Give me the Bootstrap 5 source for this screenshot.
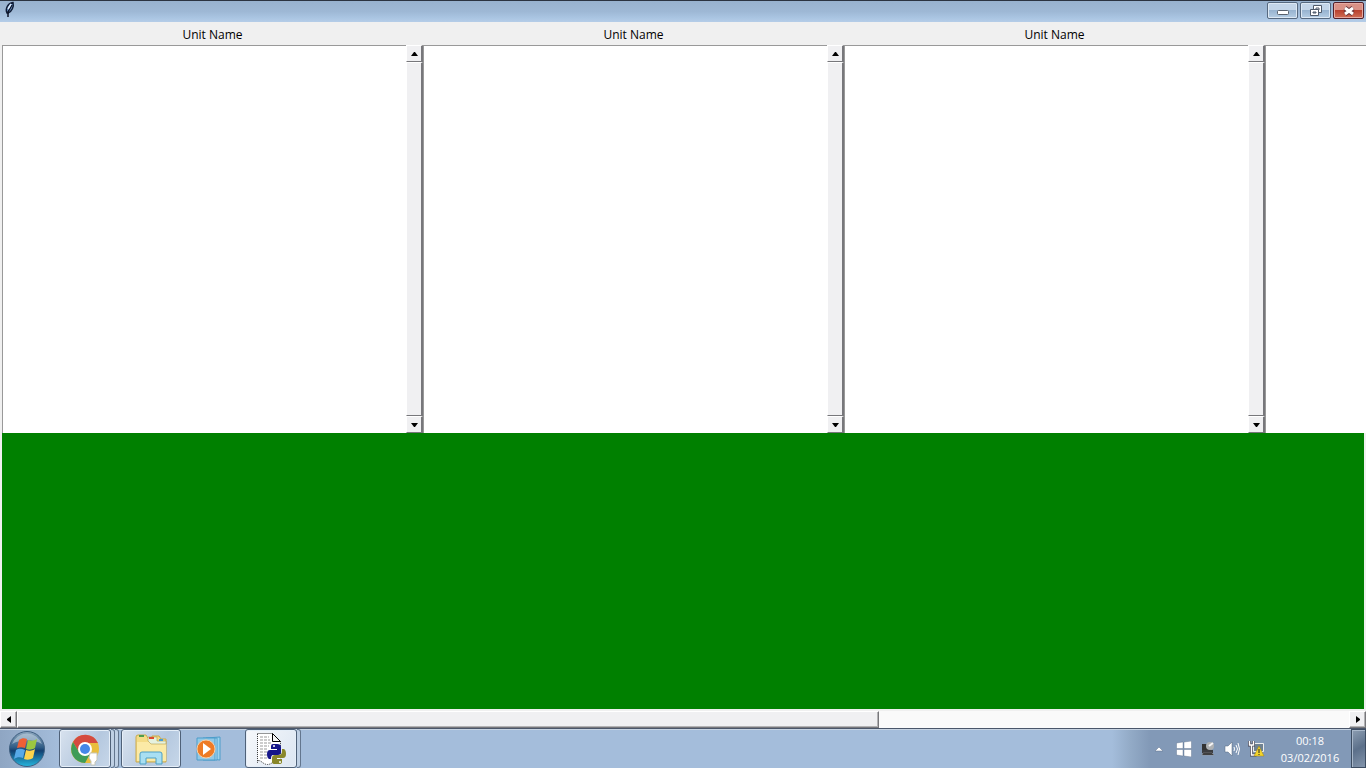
<!DOCTYPE html>
<html lang="en">
<head>
<meta charset="utf-8">
<meta name="viewport" content="width=device-width, initial-scale=1">
<title>Unit lists</title>
<link href="https://cdn.jsdelivr.net/npm/bootstrap@5.3.0/dist/css/bootstrap.min.css" rel="stylesheet">
<style>
body { font: 12px/16px "Open Sans", "Noto Sans", sans-serif; color: #000; background: #f0f0f0; }
button { padding: 0; border: 0; background: none; }
svg { display: block; }

.titlebar { height: 22px; background: linear-gradient(#98b2ce 0, #9eb8d5 50%, #aac5e2 80%, #b5cde8 100%); border-top: 1px solid #2b3340; }
.caption-group { gap: 2px; padding: 1px 2px 0 0; }
.titlebar .caption-btn { width: 31px; height: 17px; border: 1px solid #56697f; border-radius: 2px; box-shadow: inset 0 0 0 1px #dce8f4; background: linear-gradient(#c3d5e8 50%, #98b4d0 50%, #b5cde4); }
.titlebar .caption-close { border-color: #53202a; box-shadow: inset 0 0 0 1px #e5aaa2; background: linear-gradient(#d99186 50%, #b9412f 50%, #cf6e56); }

.unit { width: 421px; }
.unit label { height: 23px; padding-top: 5px; }
.unit-list { height: 388px; }
.unit-list textarea { resize: none; border: 0; border-top: 1px solid #999; border-left: 1px solid #999; background: #fff; outline: 0; overflow: hidden; }
.units { margin-left: 2px; }
.vscroll { width: 17px; background: #f0f0f2; }
.raised { background: #f0f0f2; border: 1px solid; border-color: #fff #77777b #77777b #fff; box-shadow: inset -1px -1px #b2b2b4; }
.vscroll .raised { border-right-width: 2px; box-shadow: none; }
.arrow { width: 17px; height: 17px; flex: none; }
.field { background: #008000; margin: 0 2px 2px; }
.hscroll { height: 17px; background: #fafafa; }
.hscroll .thumb { width: 64.7%; }

.taskbar { height: 40px; border-top: 1px solid #4a566a; box-shadow: inset 0 1px #c6d3e2; background: linear-gradient(90deg, #8fa6c3 0, #a4bddb 60px, #a4bddb calc(100% - 254px), #93abc7 calc(100% - 236px), #8299b7 calc(100% - 216px), #8299b7 100%); }
.start { width: 54px; margin-right: 5px; }
.task { width: 52px; border: 1px solid #4f6178; border-radius: 3px; box-shadow: inset 0 0 0 1px #e5eef8; background: linear-gradient(120deg, #d8e2ee, #b5c8df 60%, #c7d7e9); }
.task-wide { width: 60px; margin-left: 2px; }
.task-plain { width: 56px; }
.task-active { background: linear-gradient(120deg, #f6f8fb, #dce6f2); }
.stack-edge { width: 4px; border: 1px solid #63768e; border-left: 0; border-radius: 0 3px 3px 0; background: #bfd0e4; }
.clock { width: 82px; font-size: 11px; line-height: 17px; color: #fff; }
.show-desktop { width: 15px; border: 1px solid #3d4d62; box-shadow: inset 1px 1px #a9b8ca; background: linear-gradient(150deg, #8d9eb2, #5c708a 50%, #8395ac); }
</style>
</head>
<body>
<div class="vh-100 d-flex flex-column overflow-hidden">

  <header class="titlebar flex-shrink-0 d-flex justify-content-between">
    <svg class="ms-1" width="12" height="18" viewBox="0 0 12 18" aria-hidden="true">
      <path d="M3 12C1 8 4 2 9 1.500c1 4-1 9-5 10.500Z" fill="#6f9bcf" stroke="#101c35" stroke-width="1.500"/>
      <path d="M8 4 4 11v5" fill="none" stroke="#0b1226" stroke-width="1.500"/><path d="M7 3 4 8" stroke="#dcecff" stroke-width="1.500"/>
    </svg>
    <div class="caption-group d-flex">
      <button class="caption-btn d-flex align-items-center justify-content-center" aria-label="Minimize">
        <svg width="12" height="8" viewBox="0 0 12 8"><rect x=".5" y="3.5" width="11" height="4" rx="1" fill="#fff" stroke="#58606c"/></svg>
      </button>
      <button class="caption-btn d-flex align-items-center justify-content-center" aria-label="Restore">
        <svg width="14" height="12" viewBox="0 0 14 12" fill="#fff" stroke="#505b6b"><path d="M4.500.500h8v7h-8z"/><path d="M7 3h3v2H7z"/><path d="M1.500 4.500h8v6h-8z"/><path d="M4 7h3v1H4z" fill="#8da5bd"/></svg>
      </button>
      <button class="caption-btn caption-close d-flex align-items-center justify-content-center" aria-label="Close">
        <svg width="14" height="12" viewBox="0 0 14 12"><path d="m3 3 8 6m0-6-8 6" stroke="#65343a" stroke-width="5"/><path d="m3 3 8 6m0-6-8 6" stroke="#fff" stroke-width="3"/></svg>
      </button>
    </div>
  </header>

  <main class="flex-grow-1 d-flex flex-column">
    <div class="units d-flex overflow-hidden">
      <section class="unit flex-shrink-0 d-flex flex-column">
        <label class="text-center" for="unit1">Unit Name</label>
        <div class="unit-list d-flex">
          <textarea id="unit1" class="flex-grow-1"></textarea>
          <div class="vscroll d-flex flex-column">
            <button class="raised arrow d-flex align-items-center justify-content-center" aria-label="Scroll up"><svg width="7" height="4"><path d="M0 4h7L4 0H3z"/></svg></button>
            <div class="raised flex-grow-1"></div>
            <button class="raised arrow d-flex align-items-center justify-content-center" aria-label="Scroll down"><svg width="7" height="4"><path d="M0 0h7L4 4H3z"/></svg></button>
          </div>
        </div>
      </section>
      <section class="unit flex-shrink-0 d-flex flex-column">
        <label class="text-center" for="unit2">Unit Name</label>
        <div class="unit-list d-flex">
          <textarea id="unit2" class="flex-grow-1"></textarea>
          <div class="vscroll d-flex flex-column">
            <button class="raised arrow d-flex align-items-center justify-content-center" aria-label="Scroll up"><svg width="7" height="4"><path d="M0 4h7L4 0H3z"/></svg></button>
            <div class="raised flex-grow-1"></div>
            <button class="raised arrow d-flex align-items-center justify-content-center" aria-label="Scroll down"><svg width="7" height="4"><path d="M0 0h7L4 4H3z"/></svg></button>
          </div>
        </div>
      </section>
      <section class="unit flex-shrink-0 d-flex flex-column">
        <label class="text-center" for="unit3">Unit Name</label>
        <div class="unit-list d-flex">
          <textarea id="unit3" class="flex-grow-1"></textarea>
          <div class="vscroll d-flex flex-column">
            <button class="raised arrow d-flex align-items-center justify-content-center" aria-label="Scroll up"><svg width="7" height="4"><path d="M0 4h7L4 0H3z"/></svg></button>
            <div class="raised flex-grow-1"></div>
            <button class="raised arrow d-flex align-items-center justify-content-center" aria-label="Scroll down"><svg width="7" height="4"><path d="M0 0h7L4 4H3z"/></svg></button>
          </div>
        </div>
      </section>
      <section class="flex-grow-1 d-flex flex-column justify-content-end">
        <div class="unit-list d-flex"><textarea class="w-100" aria-label="Next unit"></textarea></div>
      </section>
    </div>
    <div class="field flex-grow-1"></div>
    <div class="hscroll d-flex">
      <button class="raised arrow d-flex align-items-center justify-content-center" aria-label="Scroll left"><svg width="4" height="7"><path d="M4 0v7L0 4V3z"/></svg></button>
      <div class="flex-grow-1 d-flex"><div class="thumb raised"></div></div>
      <button class="raised arrow d-flex align-items-center justify-content-center" aria-label="Scroll right"><svg width="4" height="7"><path d="M0 0v7l4-3V3z"/></svg></button>
    </div>
  </main>

  <footer class="taskbar flex-shrink-0 d-flex">
    <button class="start d-flex align-items-center justify-content-center" aria-label="Start">
      <svg width="38" height="38" viewBox="0 0 38 38">
        <defs>
          <linearGradient id="orb" x2="0" y2="1"><stop stop-color="#8fa9c0"/><stop offset=".45" stop-color="#305d86"/><stop offset=".55" stop-color="#123f70"/><stop offset="1" stop-color="#25b7df"/></linearGradient>
        </defs>
        <circle cx="19" cy="19" r="17.500" fill="url(#orb)" stroke="#3f5f80"/>
        <path d="M4 14a16 16 0 0 1 30 0c-9-5-21-5-30 0Z" fill="#c5d5e2" opacity=".55"/>
        <path d="M11 10c3-2 5-2 8-1l-2 9c-3-1-5-1-8 0Z" fill="#ef6035"/>
        <path d="M20 10c3 1 6 1 9-1l-2 9c-3 2-6 2-9 1Z" fill="#9bc741"/>
        <path d="M8 20c3-2 6-1 9 0l-2 8c-3-1-6-1-9 1Z" fill="#57a9e7"/>
        <path d="M18 20c3 1 6 1 9-1l-2 9c-3 2-6 2-9 1Z" fill="#fbd34c"/>
      </svg>
    </button>
    <button class="task d-flex align-items-center justify-content-center" aria-label="Chrome">
      <svg width="32" height="34" viewBox="0 0 32 34">
        <circle cx="16" cy="17" r="14" fill="#e9bd3c"/>
        <path d="M4 10A14 14 0 0 1 29 11H16l-6 9Z" fill="#d54b3f"/>
        <path d="M4 10a14 14 0 0 0 12 21l6-11H10Z" fill="#3f9c57"/>
        <circle cx="16" cy="17" r="7" fill="#fff"/><circle cx="16" cy="17" r="5" fill="#4587e8"/>
        <path d="m17 31 3-5 4 5Z" fill="#e9bd3c"/>
        <path d="M21 21h7v7l-2 2v3h-4v-4l-2-3Z" fill="#fff" stroke="#c6c6b8"/>
      </svg>
    </button>
    <span class="stack-edge"></span><span class="stack-edge"></span>
    <button class="task task-wide d-flex align-items-center justify-content-center" aria-label="File Explorer">
      <svg width="34" height="32" viewBox="0 0 34 32">
        <path d="M2 4q0-2 2-2h8l2 3h4V3h7l2 3h5v23H2Z" fill="#f4dc86" stroke="#c9a94f"/>
        <path d="M3 9h12l2 2h15v17H3Z" fill="#fbeaa6"/>
        <path d="M14 4h9v4h9v3H17l-3-3Z" fill="#e6f2df" stroke="#b79e4c" stroke-width=".6"/>
        <path d="M5 3h5" stroke="#4e9d4c" stroke-width="2"/><path d="M15 5h5" stroke="#dd4b31" stroke-width="2"/><path d="M25 7h4" stroke="#4a9ed2" stroke-width="2"/>
        <path d="M6 31V21q0-2 2-2h18q2 0 2 2v10h-6v-6H12v6Z" fill="#a8dff2" stroke="#4d9fc5"/>
      </svg>
    </button>
    <button class="task-plain d-flex align-items-center justify-content-center" aria-label="Media Player">
      <svg width="28" height="26" viewBox="0 0 28 26">
        <path d="M11 2l14-1v23l-14-1Z" fill="#9cd3ee" stroke="#4c9dca"/><path d="M8 2h14v22H8Z" fill="#b7e1f5" stroke="#4c9dca"/><path d="M2 2h18v22H2Z" fill="#91c9e7" stroke="#4c9dca"/>
        <circle cx="11" cy="13" r="9" fill="#ee7b25" stroke="#f8cda4"/><path d="m8 7 8 6-8 6Z" fill="#fff"/>
      </svg>
    </button>
    <button class="task task-active ms-2 d-flex align-items-center justify-content-center" aria-label="Python">
      <svg width="34" height="34" viewBox="0 0 34 34">
        <path d="M3.500 1.500h15l8 8v20q-3-3-8 1t-10 0-5 0Z" fill="#fff" stroke="#333" stroke-dasharray="1 1"/>
        <path d="M18.500 1.500v8h8Z" fill="#f5f5f5" stroke="#000"/>
        <path d="M6 5h9M6 8h10M6 11h12M6 14h9M6 17h8M6 20h7M6 23h7M6 26h7" stroke="#999" stroke-dasharray="3 1"/>
        <path d="M19 12h4q4 0 4 3v5q0 3-3 3h-5q-2 0-2 4h-2q-2-1-2-5t3-4h7v-1h-6v-3q0-2 2-2Z" fill="#16168a"/>
        <path d="M28 17h2q2 1 2 5t-3 4h-6v1h5v3q0 2-3 2h-4q-3 0-3-2v-4q0-3 3-3h4q3 0 3-4Z" fill="#89872a"/>
        <circle cx="20" cy="14" r="1" fill="#fff"/><circle cx="26" cy="30" r="1" fill="#fff"/>
      </svg>
    </button>
    <span class="stack-edge"></span>

    <div class="ms-auto d-flex align-items-center">
      <button class="me-2 px-1" aria-label="Show hidden icons"><svg width="10" height="6"><path d="M1 5h8L5 1Z" fill="#fff" stroke="#5c718c" stroke-width=".5"/></svg></button>
      <button class="me-2" aria-label="Get Windows 10"><svg width="16" height="16" fill="#fff" stroke="#566b86" stroke-width=".4"><path d="m.5 2 6.500-1v6.500H.500ZM8 1l7.500-1v7.500H8ZM.500 8.500H7V15l-6.500-1ZM8 8.500h7.500V16L8 15Z"/></svg></button>
      <button class="me-2" aria-label="Hardware"><svg width="16" height="16"><path d="M2 3h9v7H2Z" fill="#333"/><path d="M2 9h11v3H2Z" fill="#3b3d40"/><path d="M3 12h9l2 2H2Z" fill="#222" stroke="#9b9b9b" stroke-width=".5"/><circle cx="10" cy="5" r="4" fill="#aeb1b3"/><path d="m9 5 4-3" stroke="#f5f5f5" stroke-width="2"/></svg></button>
      <button class="me-2" aria-label="Volume"><svg width="16" height="16" fill="none" stroke="#fff"><path d="M1 5h3l4-4v14l-4-4H1Z" fill="#fff" stroke="#50647c" stroke-width=".5"/><path d="M10 6q1 2 0 4M12 4q3 4 0 8M14 2q3 6 0 12"/></svg></button>
      <button aria-label="Network"><svg width="17" height="17" viewBox="0 0 17 17"><path d="M5.500 3.500h10v8h-10Z" fill="#6f8292" stroke="#eee"/><path d="M1.500 1v4h4V1M3.500 5v10h5" fill="none" stroke="#445" stroke-width="3"/><path d="M1.500 1v4h4V1M3.500 5v10h5" fill="none" stroke="#fff" stroke-width="1.500"/><path d="m11 6-5 10h10Z" fill="#f4d52c" stroke="#a28112" stroke-width=".5"/><path d="M11 9v4m0 1v1" stroke="#222"/></svg></button>
      <div class="clock ms-1 text-center">00:18<br>03/02/2016</div>
      <button class="show-desktop align-self-stretch" aria-label="Show desktop"></button>
    </div>
  </footer>
</div>
<script src="https://cdn.jsdelivr.net/npm/bootstrap@5.3.0/dist/js/bootstrap.bundle.min.js"></script>
</body>
</html>
